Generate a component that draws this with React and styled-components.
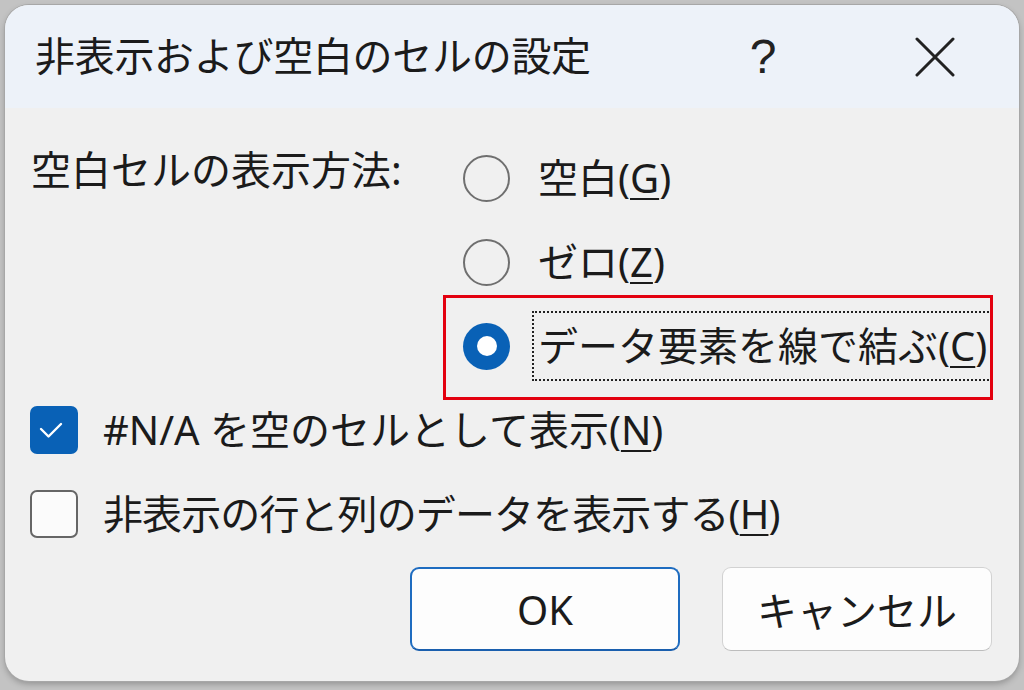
import React from "react";
import styled, { createGlobalStyle } from "styled-components";

const Global = createGlobalStyle`
  html, body { margin: 0; padding: 0; }
  body {
    background: #c3c3c3;
    font-family: "Noto Sans", "Noto Sans CJK JP", sans-serif;
    color: #1b1b1b;
  }
`;

const Page = styled.div`
  width: 1024px;
  height: 690px;
  padding: 5px 5px 9px 5px;
  box-sizing: border-box;
`;

const Dialog = styled.div`
  width: 1014px;
  height: 676px;
  border-radius: 24px;
  overflow: hidden;
  display: flex;
  flex-direction: column;
  background: #f0f0f0;
  box-shadow: 0 0 0 1px #a7a7a7, 0 3px 6px rgba(0, 0, 0, 0.25);
`;

const TitleBar = styled.div`
  height: 103px;
  flex: none;
  display: flex;
  align-items: center;
  padding: 0 34px 0 30px;
  background: #edf2f9;
`;

const Title = styled.div`
  flex: 1;
  font-size: 40px;
  line-height: 48px;
  letter-spacing: -0.3px;
  padding-bottom: 2px;
`;

const TitleControls = styled.div`
  display: flex;
  gap: 72px;
  align-items: center;
`;

const TitleButton = styled.div`
  width: 100px;
  height: 60px;
  display: flex;
  align-items: center;
  justify-content: center;
  font-family: "Liberation Sans", sans-serif;
  font-size: 48px;
  font-weight: 400;
  color: #222;
`;

const Body = styled.div`
  flex: 1;
  display: flex;
  flex-direction: column;
  padding: 28px 27px 29px 25px;
`;

const OptionsRow = styled.div`
  display: flex;
`;

const GroupLabel = styled.div`
  width: 413px;
  flex: none;
  padding-left: 1px;
  box-sizing: border-box;
  font-size: 40px;
  line-height: 68px;
`;

const RadioGroup = styled.div`
  display: flex;
  flex-direction: column;
  width: 557px;
`;

const RadioItem = styled.div`
  position: relative;
  height: 84px;
  display: flex;
  align-items: center;
  gap: 22px;
  padding-left: 20px;
  &::after {
    content: "";
    display: ${(p) => (p.$marked ? "block" : "none")};
    position: absolute;
    left: 0;
    right: 0;
    top: -9px;
    bottom: -12px;
    border: 3px solid #e3000f;
    pointer-events: none;
  }
`;

const RadioCircle = styled.div`
  width: 47px;
  height: 47px;
  box-sizing: border-box;
  border-radius: 50%;
  flex: none;
  display: flex;
  align-items: center;
  justify-content: center;
  border: ${(p) => (p.$checked ? "none" : "2px solid #6f6f6f")};
  background: ${(p) => (p.$checked ? "#0961b6" : "transparent")};
  &::before {
    content: "";
    display: ${(p) => (p.$checked ? "block" : "none")};
    width: 20px;
    height: 20px;
    border-radius: 50%;
    background: #fff;
  }
`;

const OptionText = styled.span`
  font-size: 40px;
  line-height: 62px;
  padding: 2px 4px;
  border: 2px dotted ${(p) => (p.$focused ? "#222" : "transparent")};
  white-space: nowrap;
`;

const Key = styled.span`
  text-decoration: underline;
  text-decoration-thickness: 2px;
  text-underline-offset: 5px;
`;

const CheckRow = styled.div`
  height: 84px;
  display: flex;
  align-items: center;
  gap: 25px;
`;

const CheckBox = styled.div`
  width: 48px;
  height: 48px;
  box-sizing: border-box;
  border-radius: 7px;
  flex: none;
  display: flex;
  align-items: center;
  justify-content: center;
  background: ${(p) => (p.$checked ? "#0961b6" : "#fbfbfb")};
  border: ${(p) => (p.$checked ? "none" : "2px solid #666")};
`;

const CheckText = styled.span`
  font-size: 40px;
  line-height: 62px;
  white-space: nowrap;
  letter-spacing: ${(p) => (p.$tight ? "-0.9px" : "0")};
`;

const ButtonRow = styled.div`
  margin-top: 11px;
  display: flex;
  justify-content: flex-end;
  gap: 42px;
`;

const Button = styled.div`
  width: 270px;
  height: 84px;
  box-sizing: border-box;
  border-radius: 9px;
  background: #fdfdfd;
  display: flex;
  align-items: center;
  justify-content: center;
  font-size: 40px;
  border: ${(p) => (p.$primary ? "2px solid #1e6cc0" : "1.5px solid #d2d2d2")};
  border-bottom-color: ${(p) => (p.$primary ? "#1a5fae" : "#bdbdbd")};
`;

const CloseIcon = () => (
  <svg width="40" height="40" viewBox="0 0 40 40">
    <path d="M2 2 L38 38 M38 2 L2 38" stroke="#222" strokeWidth="3" strokeLinecap="round" />
  </svg>
);

const CheckMark = () => (
  <svg width="48" height="48" viewBox="0 0 48 48">
    <path d="M11 23 L18.5 30.5 L31 18" fill="none" stroke="#fff" strokeWidth="2.4" strokeLinecap="round" strokeLinejoin="round" />
  </svg>
);

export default function App() {
  return (
    <Page>
      <Global />
      <Dialog>
        <TitleBar>
          <Title>非表示および空白のセルの設定</Title>
          <TitleControls>
            <TitleButton>?</TitleButton>
            <TitleButton>
              <CloseIcon />
            </TitleButton>
          </TitleControls>
        </TitleBar>
        <Body>
          <OptionsRow>
            <GroupLabel>空白セルの表示方法:</GroupLabel>
            <RadioGroup>
              <RadioItem>
                <RadioCircle />
                <OptionText>
                  空白(<Key>G</Key>)
                </OptionText>
              </RadioItem>
              <RadioItem>
                <RadioCircle />
                <OptionText>
                  ゼロ(<Key>Z</Key>)
                </OptionText>
              </RadioItem>
              <RadioItem $marked>
                <RadioCircle $checked />
                <OptionText $focused>
                  データ要素を線で結ぶ(<Key>C</Key>)
                </OptionText>
              </RadioItem>
            </RadioGroup>
          </OptionsRow>
          <CheckRow>
            <CheckBox $checked>
              <CheckMark />
            </CheckBox>
            <CheckText>
              #N/A を空のセルとして表示(<Key>N</Key>)
            </CheckText>
          </CheckRow>
          <CheckRow>
            <CheckBox />
            <CheckText $tight>
              非表示の行と列のデータを表示する(<Key>H</Key>)
            </CheckText>
          </CheckRow>
          <ButtonRow>
            <Button $primary>OK</Button>
            <Button>キャンセル</Button>
          </ButtonRow>
        </Body>
      </Dialog>
    </Page>
  );
}
